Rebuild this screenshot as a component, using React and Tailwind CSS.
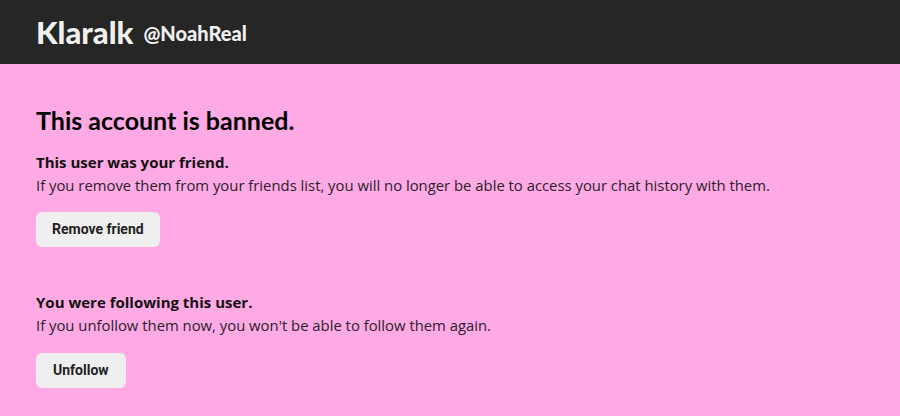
export default function App() {
  return (
    <div className="min-h-[416px] w-full bg-[#ffa9e5] text-[#111]" style={{ fontFamily: '"Open Sans", sans-serif' }}>
      {/* Header */}
      <header className="flex h-[64px] items-center gap-[10px] bg-[#252625] px-9">
        <h1 className="font-['Lato',sans-serif] text-[31px] font-black text-[#f0f0f0]">Klaralk</h1>
        <span className="mt-[2px] font-['Lato',sans-serif] text-[20px] font-black text-[#f0f0f0]">@NoahReal</span>
      </header>

      <main className="px-9 pt-[41px]">
        <h2 className="font-['Lato',sans-serif] text-[25px] font-bold leading-[30px] text-black">This account is banned.</h2>

        <section className="mt-[16px]">
          <p className="text-[15px] font-bold leading-[22px]">This user was your friend.</p>
          <p className="text-[14.85px] leading-[24px] text-[#2a1f2a]">
            If you remove them from your friends list, you will no longer be able to access your chat history with them.
          </p>
          <button
            type="button"
            className="mt-[15px] h-[35px] rounded-md bg-[#efefef] px-4 font-['Roboto',sans-serif] text-[14px] font-bold text-[#222]"
          >
            Remove friend
          </button>
        </section>

        <section className="mt-[44px]">
          <p className="text-[15px] font-bold leading-[22px]">You were following this user.</p>
          <p className="text-[14.85px] leading-[24px] text-[#2a1f2a]">
            If you unfollow them now, you won't be able to follow them again.
          </p>
          <button
            type="button"
            className="mt-[16px] h-[35px] rounded-md bg-[#efefef] px-[17px] font-['Roboto',sans-serif] text-[14px] font-bold text-[#222]"
          >
            Unfollow
          </button>
        </section>
      </main>
    </div>
  );
}
